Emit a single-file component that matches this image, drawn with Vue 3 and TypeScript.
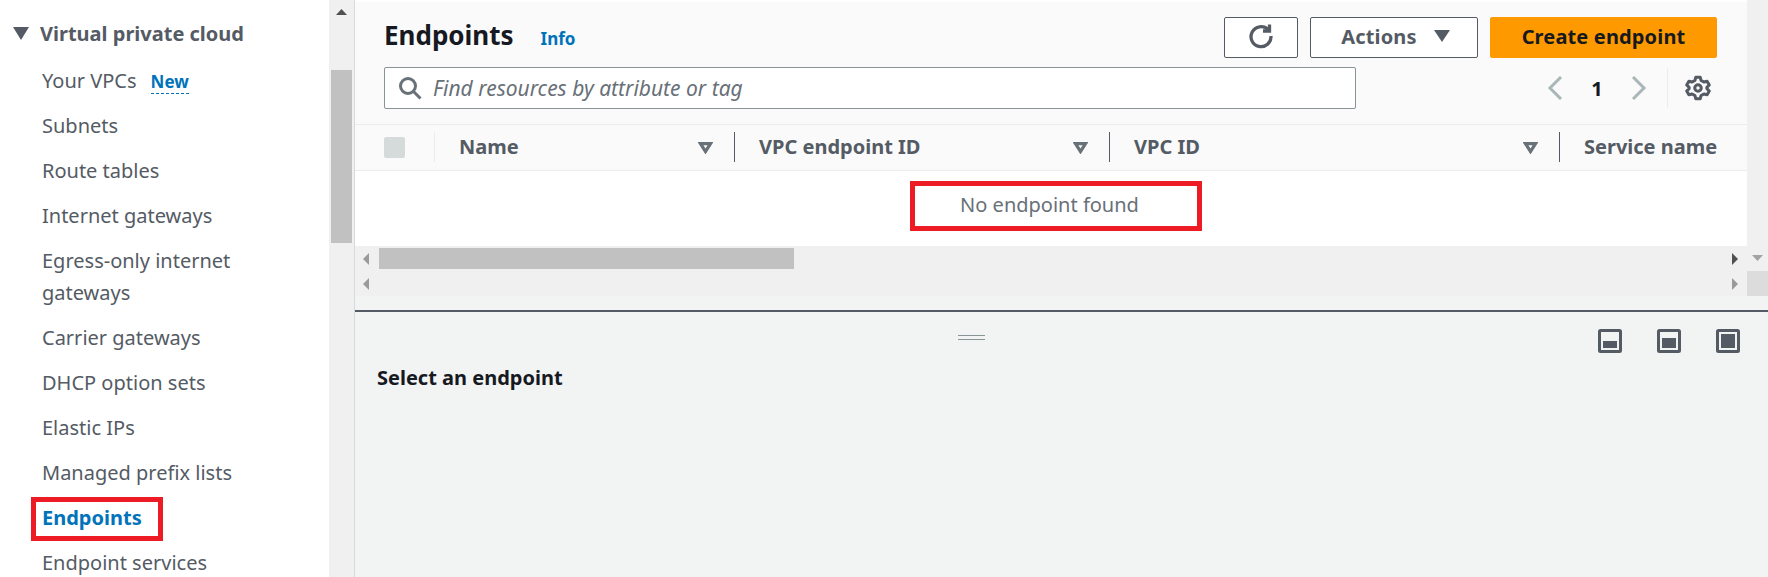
<script setup lang="ts">
interface NavItem { label: string; badge?: string; active?: boolean }
const navItems: NavItem[] = [
  { label: 'Your VPCs', badge: 'New' },
  { label: 'Subnets' },
  { label: 'Route tables' },
  { label: 'Internet gateways' },
  { label: 'Egress-only internet gateways' },
  { label: 'Carrier gateways' },
  { label: 'DHCP option sets' },
  { label: 'Elastic IPs' },
  { label: 'Managed prefix lists' },
  { label: 'Endpoints', active: true },
  { label: 'Endpoint services' },
]
const columns = [
  { label: 'Name', width: 300, sort: true },
  { label: 'VPC endpoint ID', width: 375, sort: true },
  { label: 'VPC ID', width: 450, sort: true },
  { label: 'Service name', width: 187, sort: false },
]
</script>

<template>
  <div class="page">
    <aside class="sidebar">
      <div class="group">
        <svg class="caret" width="16" height="13" viewBox="0 0 16 13"><path d="M0 0h16L8 13z" fill="#545b64" /></svg>
        <span>Virtual private cloud</span>
      </div>
      <ul class="nav">
        <li v-for="item in navItems" :key="item.label" :class="{ active: item.active }">
          <span class="nav-label">{{ item.label }}</span>
          <span v-if="item.badge" class="badge">{{ item.badge }}</span>
        </li>
      </ul>
    </aside>
    <div class="rail">
      <svg class="rail-up" width="11" height="6" viewBox="0 0 11 6"><path d="M5.5 0 11 6H0z" fill="#505050" /></svg>
      <div class="rail-thumb"></div>
    </div>

    <main class="main">
      <div class="top-area">
        <div class="top-left">
          <section class="panel">
            <div class="title-row">
              <h1>Endpoints</h1>
              <a class="info">Info</a>
              <div class="actions">
                <button class="btn refresh" aria-label="Refresh">
                  <svg width="26" height="26" viewBox="0 0 26 26" fill="none" stroke="#545b64" stroke-width="3.300">
                    <path d="M20 6.5A10 10 0 1 0 23 13" />
                    <path d="M21.5 1.5v6.500h-6.500" />
                  </svg>
                </button>
                <button class="btn menu">
                  <span>Actions</span>
                  <svg width="16" height="12" viewBox="0 0 16 12"><path d="M0 0h16L8 12z" fill="#545b64" /></svg>
                </button>
                <button class="btn primary">Create endpoint</button>
              </div>
            </div>
            <div class="filter-row">
              <label class="search">
                <svg width="24" height="24" viewBox="0 0 24 24" fill="none" stroke="#687078" stroke-width="3">
                  <circle cx="10" cy="10" r="7.500" />
                  <path d="m15.500 15.500 7 7" />
                </svg>
                <span>Find resources by attribute or tag</span>
              </label>
              <div class="pager">
                <svg width="16" height="24" viewBox="0 0 16 24" fill="none" stroke="#aab7b8" stroke-width="3"><path d="M14 1 3 12l11 11" /></svg>
                <span class="page-no">1</span>
                <svg width="16" height="24" viewBox="0 0 16 24" fill="none" stroke="#aab7b8" stroke-width="3"><path d="m2 1 11 11L2 23" /></svg>
                <span class="pager-div"></span>
                <svg width="26" height="26" viewBox="0 0 24 24" fill="none" stroke="#545b64" stroke-width="2.800" stroke-linejoin="round">
                  <path d="M10 2h4l.8 3 2.600 1.500 3-.8 2 3.500-2.200 2.200v1.200l2.200 2.200-2 3.500-3-.8-2.600 1.500-.8 3h-4l-.8-3-2.600-1.500-3 .8-2-3.500 2.200-2.200v-1.200L1.600 9.200l2-3.500 3 .8L9.200 5z" />
                  <circle cx="12" cy="12" r="3" />
                </svg>
              </div>
            </div>
          </section>
          <div class="thead">
            <div class="check-cell"><span class="check"></span></div>
            <div v-for="col in columns" :key="col.label" class="th" :style="{ width: col.width + 'px' }">
              <span>{{ col.label }}</span>
              <template v-if="col.sort">
                <svg class="sort" width="15" height="12" viewBox="0 0 15 12" fill="none" stroke="#687078" stroke-width="3.200"><path d="M2.500 1.600h10L7.500 9.500z" /></svg>
                <span class="col-div"></span>
              </template>
            </div>
          </div>
          <div class="empty-row"><span class="empty">No endpoint found</span></div>
        </div>
        <div class="v-track"></div>
      </div>

      <div class="scroll-row">
        <div class="sb-cell">
          <svg width="6" height="12" viewBox="0 0 6 12"><path d="M6 0v12L0 6z" fill="#9a9a9a" /></svg>
          <div class="h-thumb"></div>
          <svg class="arrow-end" width="6" height="12" viewBox="0 0 6 12"><path d="M0 0v12l6-6z" fill="#505050" /></svg>
        </div>
        <div class="sb-corner">
          <svg width="11" height="6" viewBox="0 0 11 6"><path d="M0 0h11L5.500 6z" fill="#a3a3a3" /></svg>
        </div>
      </div>
      <div class="scroll-row">
        <div class="sb-cell">
          <svg width="6" height="12" viewBox="0 0 6 12"><path d="M6 0v12L0 6z" fill="#9a9a9a" /></svg>
          <svg class="arrow-end" width="6" height="12" viewBox="0 0 6 12"><path d="M0 0v12l6-6z" fill="#9a9a9a" /></svg>
        </div>
        <div class="sb-corner square"></div>
      </div>

      <section class="split">
        <div class="split-head">
          <span class="handle"></span>
          <div class="modes">
            <svg width="24" height="24" viewBox="0 0 24 24"><rect x="1.500" y="1.500" width="21" height="21" rx="1" fill="none" stroke="#545b64" stroke-width="3" /><rect x="5" y="12" width="14" height="7" fill="#545b64" /></svg>
            <svg width="24" height="24" viewBox="0 0 24 24"><rect x="1.500" y="1.500" width="21" height="21" rx="1" fill="none" stroke="#545b64" stroke-width="3" /><rect x="5" y="9" width="14" height="10" fill="#545b64" /></svg>
            <svg width="24" height="24" viewBox="0 0 24 24"><rect x="1.500" y="1.500" width="21" height="21" rx="1" fill="none" stroke="#545b64" stroke-width="3" /><rect x="5" y="5" width="14" height="14" fill="#545b64" /></svg>
          </div>
        </div>
        <h2>Select an endpoint</h2>
      </section>
    </main>

    <div class="mark nav-mark"></div>
    <div class="mark empty-mark"></div>
  </div>
</template>

<style>
html, body { margin: 0; padding: 0; overflow: hidden; background: #fff; }
</style>

<style scoped>
.page {
  position: relative;
  display: flex;
  width: 1768px;
  height: 577px;
  overflow: hidden;
  font-family: "Noto Sans", "Open Sans", sans-serif;
  font-size: 20px;
  color: #545b64;
}
.sidebar { width: 329px; flex: none; padding-top: 16px; box-sizing: border-box; }
.group { display: flex; align-items: center; gap: 11px; padding-left: 13px; height: 34px; font-weight: 700; }
.nav { list-style: none; margin: 14.500px 0 0; padding: 0 70px 0 42px; }
.nav li { line-height: 32.500px; margin-bottom: 12.500px; }
.nav li.active { color: #0073bb; font-weight: 700; }
.badge { margin-left: 14px; color: #0073bb; font-size: 17px; font-weight: 700; border-bottom: 1px dashed #0073bb; line-height: 22px; display: inline-block; }
.rail { width: 26px; flex: none; box-sizing: border-box; background: #f0f0f0; position: relative; border-right: 1px solid #d5dbdb; }
.rail-up { display: block; margin: 9px 0 0 7px; }
.rail-thumb { width: 21px; height: 173px; margin: 55px 0 0 2px; background: #c1c1c1; }

.main { flex: 1; min-width: 0; display: flex; flex-direction: column; background: #f2f3f3; }
.top-area { display: flex; height: 246px; flex: none; }
.top-left { flex: 1; min-width: 0; overflow: hidden; background: #fff; }
.v-track { width: 21px; flex: none; background: #f0f0f0; }
.panel { height: 122px; margin-top: 2px; background: #fafafa; border-bottom: 1px solid #eaeded; padding: 0 30px 0 29px; }
.title-row { display: flex; align-items: center; height: 41px; padding-top: 15px; }
h1 { margin: 0 0 6px; font-size: 26px; font-weight: 700; color: #16191f; line-height: 36px; }
.info { margin-left: 27px; margin-top: 2px; color: #0073bb; font-size: 17px; font-weight: 700; }
.actions { margin-left: auto; display: flex; gap: 12px; }
.btn { font: inherit; height: 41px; box-sizing: border-box; border-radius: 2px; border: 1px solid #545b64; background: #fff; color: #545b64; font-weight: 700; display: flex; align-items: center; justify-content: center; padding: 0 0 3px; letter-spacing: .15px; }
.refresh { width: 74px; }
.menu { width: 168px; gap: 17px; padding-left: 3px; }
.primary { width: 227px; background: #ff9900; border-color: #ff9900; color: #16191f; }
.filter-row { display: flex; align-items: center; margin-top: 9px; }
.search { width: 972px; height: 42px; box-sizing: border-box; border: 1px solid #879596; border-radius: 2px; background: #fff; display: flex; align-items: center; gap: 11px; padding: 0 0 1px 13px; font-size: 21px; font-style: italic; color: #687078; }
.pager { display: flex; align-items: center; margin-left: 191px; }
.page-no { width: 68px; text-align: center; color: #16191f; font-weight: 700; }
.pager-div { width: 1px; height: 40px; background: #eaeded; margin: 0 17px 0 20px; }
.thead { display: flex; height: 45px; background: #fafafa; border-bottom: 1px solid #eaeded; }
.check-cell { width: 80px; flex: none; position: relative; padding-left: 29px; box-sizing: border-box; display: flex; align-items: center; }
.check-cell::after { content: ""; position: absolute; right: 0; top: 7px; height: 30px; width: 1px; background: #eaeded; }
.check { width: 21px; height: 21px; background: #d5dbdb; border-radius: 2px; }
.th { flex: none; box-sizing: border-box; padding: 0 0 2px 24px; display: flex; align-items: center; font-weight: 700; position: relative; white-space: nowrap; }
.sort { position: absolute; right: 22px; top: 17px; }
.col-div { position: absolute; right: 0; top: 7px; height: 30px; width: 1px; background: #545b64; }
.empty-row { height: 75px; display: flex; justify-content: center; align-items: center; padding: 0 3px 9px 0; box-sizing: border-box; color: #687078; }

.scroll-row { display: flex; height: 25px; flex: none; }
.sb-cell { flex: 1; min-width: 0; background: #f0f0f0; display: flex; align-items: center; padding: 0 9px 0 8px; }
.h-thumb { width: 415px; height: 21px; margin-left: 10px; background: #c1c1c1; }
.arrow-end { margin-left: auto; }
.sb-corner { width: 21px; flex: none; background: #f0f0f0; display: flex; justify-content: center; padding-top: 9px; box-sizing: border-box; }
.sb-corner.square { background: #dcdcdc; padding: 0; }

.split { flex: 1; margin-top: 14px; border-top: 2px solid #545b64; background: #f2f3f3; }
.split-head { height: 35px; padding-top: 17px; display: flex; position: relative; }
.handle { position: absolute; left: 603px; top: 23px; width: 27px; height: 3px; border-top: 1px solid #879596; border-bottom: 1px solid #879596; }
.modes { margin-left: auto; display: flex; gap: 35px; margin-right: 28px; }
h2 { margin: 0; padding-left: 22px; font-size: 20px; line-height: 28px; font-weight: 700; color: #16191f; }

.mark { position: absolute; box-sizing: border-box; border: 5px solid #ed1c24; }
.nav-mark { left: 31px; top: 497px; width: 132px; height: 44px; }
.empty-mark { left: 910px; top: 181px; width: 292px; height: 50px; }
</style>
